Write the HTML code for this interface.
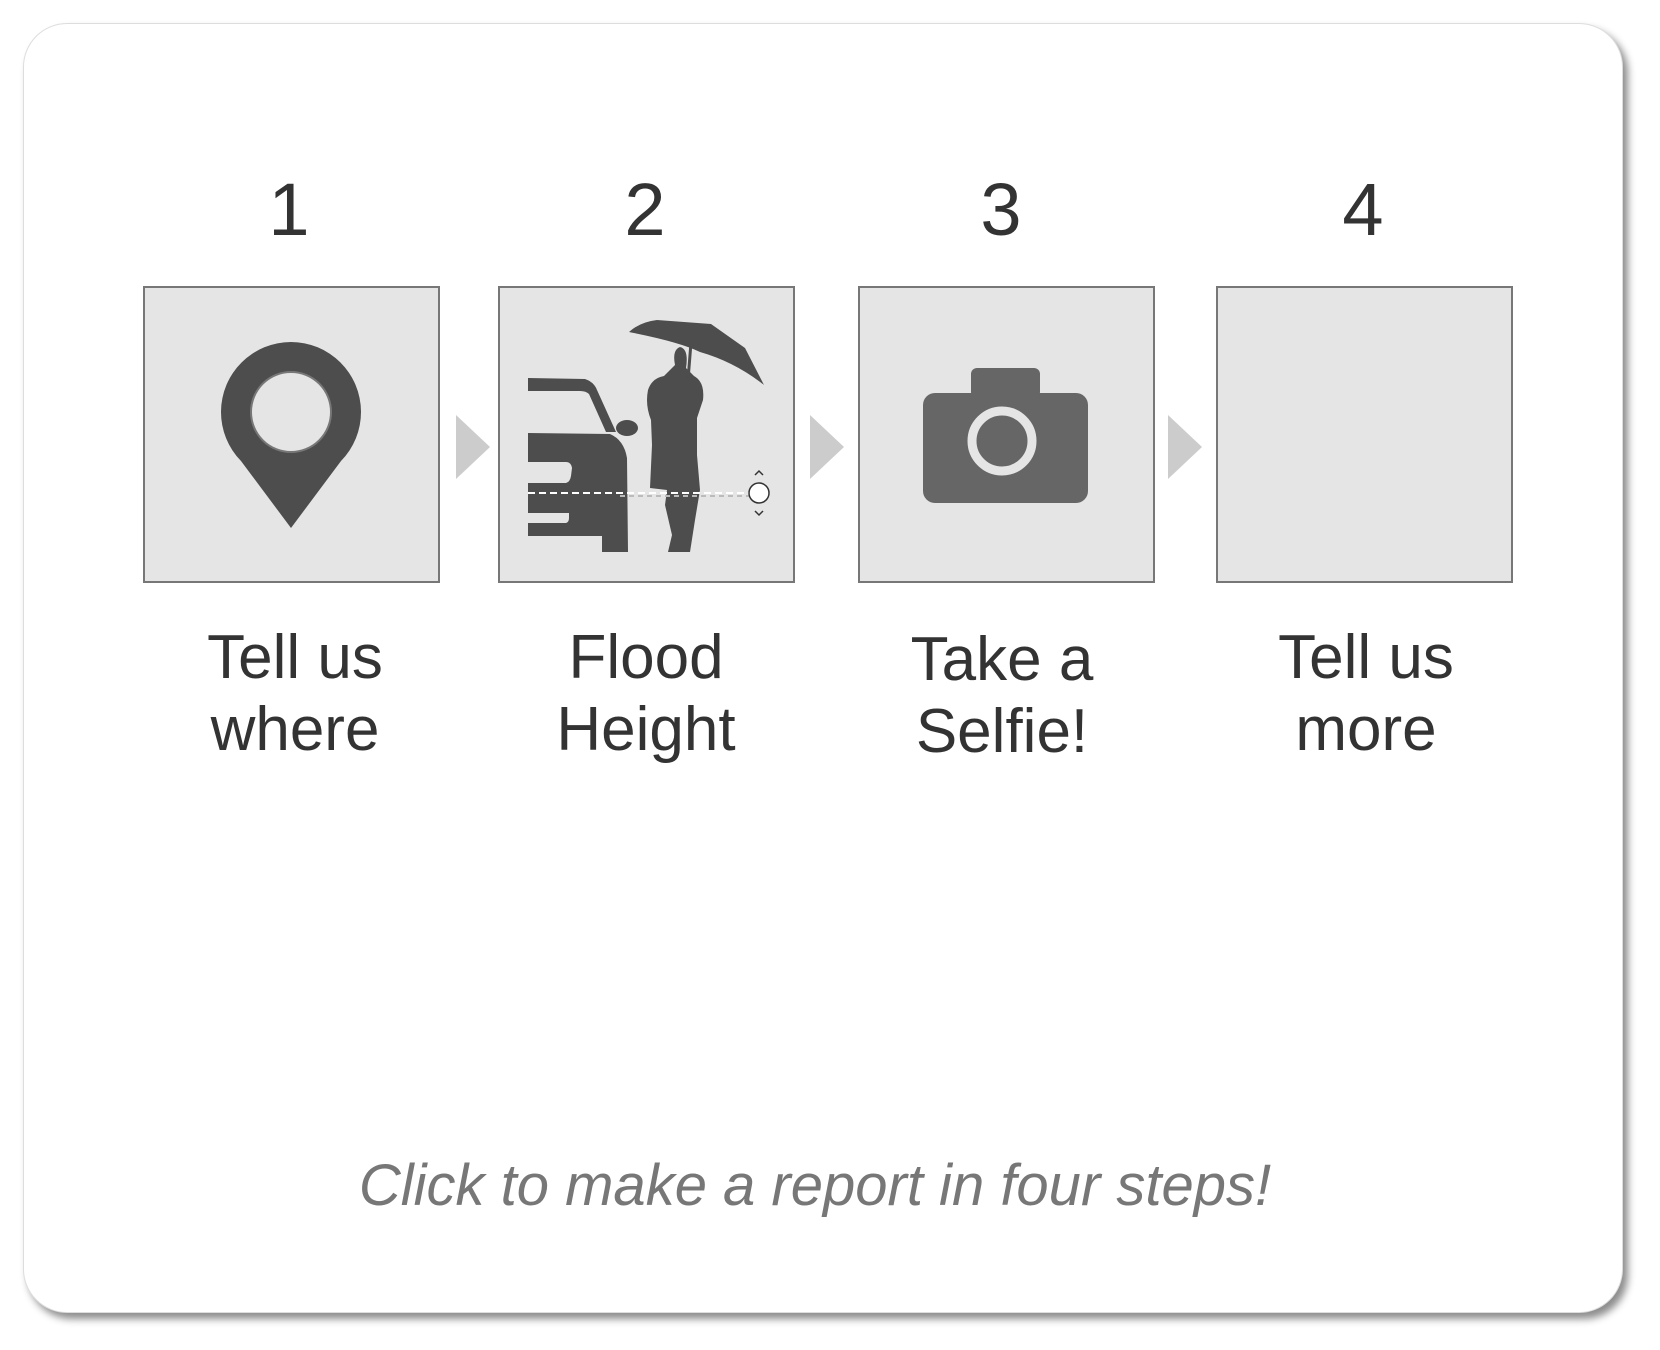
<!DOCTYPE html>
<html><head><meta charset="utf-8"><style>
html,body{margin:0;padding:0;background:#fff;width:1660px;height:1350px;overflow:hidden;font-family:"Liberation Sans",sans-serif;}
.card{position:absolute;left:23px;top:23px;width:1600px;height:1290px;border-radius:44px;background:#fff;box-shadow:5px 6px 8px rgba(0,0,0,0.45);border:1px solid #ddd;box-sizing:border-box;}
.t{position:absolute;text-align:center;color:#333;}
.num{font-size:74px;top:170px;width:200px;line-height:80px;}
.lab{font-size:62px;line-height:72px;top:622px;width:300px;}
.cap{position:absolute;left:0;width:1630px;text-align:center;top:1152px;font-size:58px;font-style:italic;color:#777;}
</style></head><body>
<div class="card"></div>
<div class="t num" style="left:189px">1</div>
<div class="t num" style="left:545px">2</div>
<div class="t num" style="left:901px">3</div>
<div class="t num" style="left:1263px">4</div>
<div class="t lab" style="left:145px">Tell us<br>where</div>
<div class="t lab" style="left:496px">Flood<br>Height</div>
<div class="t lab" style="left:852px;top:624px">Take a<br>Selfie!</div>
<div class="t lab" style="left:1216px">Tell us<br>more</div>
<div class="cap">Click to make a report in four steps!</div>
<svg width="1660" height="1350" style="position:absolute;left:0;top:0">
<g fill="#e5e5e5" stroke="#777" stroke-width="2">
<rect x="144" y="287" width="295" height="295"/>
<rect x="499" y="287" width="295" height="295"/>
<rect x="859" y="287" width="295" height="295"/>
<rect x="1217" y="287" width="295" height="295"/>
</g>
<g fill="#ccc">
<polygon points="456,415 490,447 456,479"/>
<polygon points="810,415 844,447 810,479"/>
<polygon points="1168,415 1202,447 1168,479"/>
</g>
<path d="M291 528 L241 461 A70 70 0 1 1 341 461 Z" fill="#4d4d4d"/>
<circle cx="291" cy="412" r="40" fill="#e5e5e5" stroke="#777" stroke-width="2"/>
<rect x="971" y="368" width="69" height="30" rx="6" fill="#666"/>
<rect x="923" y="393" width="165" height="110" rx="12" fill="#666"/>
<circle cx="1002" cy="441" r="30" fill="none" stroke="#e5e5e5" stroke-width="9"/>
<g fill="#4d4d4d">
<path d="M528 378 L585 379 Q594 382 597 390 L616 432 L606 432 L589 394 Q586 391 580 391 L528 391 Z"/>
<path d="M528 433 L610 434 Q624 440 627 458 L628 552 L602 552 L602 536 L528 536 L528 523 L566 523 Q569 522 569 518 L569 513 L528 513 L528 483 L566 483 Q570 482 571 476 L572 468 Q571 462 566 462 L528 462 Z"/>
<ellipse cx="627" cy="428" rx="11" ry="8"/>
<path d="M629 332 Q640 322 657 320 L711 324 L745 348 L764 385 Q735 362 700 352 Q680 342 629 332 Z"/>
<path d="M675 365 Q672 350 680 347 Q689 349 686 368 L694 376 Q705 382 703 400 L697 418 L697 455 L700 490 L695 520 L690 552 L668 552 L672 535 L665 505 L667 490 L650 488 L652 445 L651 420 Q645 405 648 390 Q652 378 664 376 Z"/>
</g>
<path d="M612 482 L622 432 Q626 420 620 418" fill="none" stroke="#e5e5e5" stroke-width="0"/>
<line x1="692" y1="330" x2="688" y2="380" stroke="#4d4d4d" stroke-width="3"/>
<line x1="528" y1="493" x2="750" y2="493" stroke="#fff" stroke-width="2" stroke-dasharray="7,4"/>
<line x1="620" y1="496" x2="750" y2="496" stroke="#bbb" stroke-width="2" stroke-dasharray="5,4"/>
<circle cx="759" cy="493" r="10" fill="#fff" stroke="#333" stroke-width="1.5"/>
<path d="M755 475 L759 471 L763 475 M755 511 L759 515 L763 511" fill="none" stroke="#333" stroke-width="1.5"/>
</svg>
</body></html>
